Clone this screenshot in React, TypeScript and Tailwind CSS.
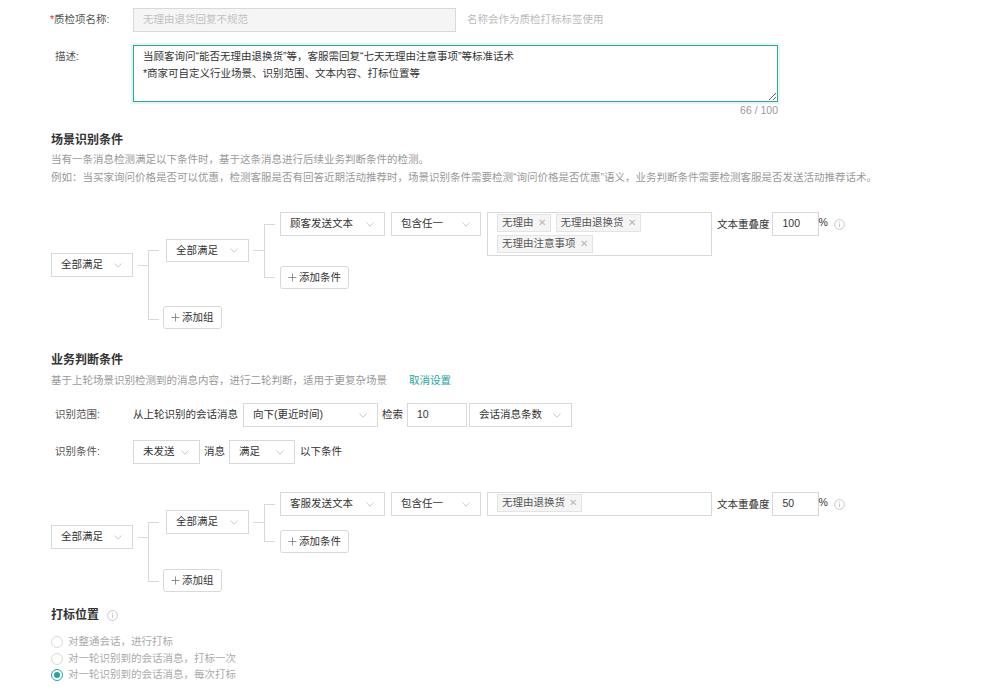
import React from "react";

const BORDER = "border-[#d9d9d9]";

function Chevron() {
  return (
    <svg width="8" height="5" viewBox="0 0 8 5" className="shrink-0">
      <path d="M0.5 0.5 L4 4.2 L7.5 0.5" fill="none" stroke="#c4c4c4" strokeWidth="0.9" />
    </svg>
  );
}

function Info() {
  return (
    <svg width="11" height="11" viewBox="0 0 11 11" className="shrink-0">
      <circle cx="5.5" cy="5.5" r="4.9" fill="none" stroke="#c2c2c2" strokeWidth="0.9" />
      <line x1="5.5" y1="4.6" x2="5.5" y2="8.2" stroke="#c2c2c2" strokeWidth="0.9" />
      <circle cx="5.5" cy="3.1" r="0.6" fill="#c2c2c2" />
    </svg>
  );
}

function Select({ text, className }: { text: string; className: string }) {
  return (
    <div
      className={`flex shrink-0 items-center justify-between border ${BORDER} bg-white pl-[9px] pr-[10px] text-[#333] ${className}`}
    >
      <span className="whitespace-nowrap">{text}</span>
      <Chevron />
    </div>
  );
}

function AddBtn({ text, className }: { text: string; className: string }) {
  return (
    <div
      className={`flex h-[23px] shrink-0 items-center rounded-[3px] border ${BORDER} bg-white pl-[7px] pr-[7px] text-[#333] ${className}`}
    >
      <svg width="9" height="9" viewBox="0 0 9 9" className="mr-[2px]">
        <line x1="4.5" y1="0.5" x2="4.5" y2="8.5" stroke="#777" strokeWidth="0.8" />
        <line x1="0.5" y1="4.5" x2="8.5" y2="4.5" stroke="#777" strokeWidth="0.8" />
      </svg>
      <span className="whitespace-nowrap">{text}</span>
    </div>
  );
}

function Tag({ text }: { text: string }) {
  return (
    <div className="flex h-[18px] items-center border border-[#e3e3e3] bg-[#f5f5f5] px-[4px] text-[#555]">
      <span className="whitespace-nowrap">{text}</span>
      <span className="ml-[4px] text-[9.5px] text-[#b5b5b5]">✕</span>
    </div>
  );
}

function ConditionRow({ who, tags, overlap }: { who: string; tags: string[]; overlap: string }) {
  return (
    <div className="flex items-start">
      <Select text={who} className="h-[24px] w-[105px]" />
      <Select text="包含任一" className="ml-[6px] h-[24px] w-[90px]" />
      <div
        className={`ml-[6px] flex min-h-[24px] w-[225px] flex-wrap gap-x-[5px] gap-y-[3px] border ${BORDER} bg-white pb-[2px] pl-[9px] pr-[9px] pt-[1px]`}
      >
        {tags.map((t) => (
          <Tag key={t} text={t} />
        ))}
      </div>
      <span className="ml-[5px] whitespace-nowrap leading-[24px] text-[#333]">文本重叠度</span>
      <div className={`ml-[2px] flex h-[24px] w-[47px] items-center border ${BORDER} bg-white pl-[10px] text-[#333]`}>
        {overlap}
      </div>
      <span className="leading-[20px] text-[#333]">%</span>
      <div className="ml-[6px] mt-[7px]">
        <Info />
      </div>
    </div>
  );
}

function Radio({ checked, text }: { checked?: boolean; text: string }) {
  return (
    <div className="flex h-[16.5px] items-center">
      <div
        className={`flex h-[12px] w-[12px] items-center justify-center rounded-full border bg-white ${
          checked ? "border-[#22a699]" : "border-[#d9d9d9]"
        }`}
      >
        {checked && <div className="h-[6px] w-[6px] rounded-full bg-[#22a699]" />}
      </div>
      <span className="ml-[5px] whitespace-nowrap text-[#aaa]">{text}</span>
    </div>
  );
}

export default function App() {
  return (
    <div className="min-h-[697px] w-[1003px] overflow-hidden bg-white pl-[50px] pt-[8px] font-['Liberation_Sans','Noto_Sans_CJK_SC',sans-serif] text-[10.5px] text-[#333]">
      {/* Row 1 */}
      <div className="flex items-center">
        <div className="w-[83px] whitespace-nowrap text-[#555]">
          <span className="text-[#f5222d]">*</span>质检项名称:
        </div>
        <div className={`flex h-[24px] w-[323px] items-center border ${BORDER} bg-[#f5f5f5] pl-[9px] text-[#c0c0c0]`}>
          无理由退货回复不规范
        </div>
        <span className="ml-[11px] text-[#bbb]">名称会作为质检打标标签使用</span>
      </div>

      {/* Row 2 */}
      <div className="mt-[13px] flex items-start">
        <div className="w-[83px] pl-[5px] pt-[3px] leading-[17px] text-[#555]">描述:</div>
        <textarea
          readOnly
          value={"当顾客询问“能否无理由退换货”等，客服需回复“七天无理由注意事项”等标准话术\n*商家可自定义行业场景、识别范围、文本内容、打标位置等"}
          className="block h-[57px] w-[645px] border border-[#2aaa9e] bg-white px-[9px] py-[2px] leading-[17px] text-[#333] shadow-[0_0_0_2px_rgba(42,170,158,0.12)] outline-none"
        />
      </div>
      <div className="mt-[1px] w-[728px] text-right leading-[14px] text-[#999]">66 / 100</div>

      {/* Section 1 */}
      <div className="ml-[1px] mt-[14px] text-[12px] font-bold leading-[18px] text-[#333]">场景识别条件</div>
      <div className="ml-[1px] mt-[1px] leading-[18px] text-[#999]">
        <div>当有一条消息检测满足以下条件时，基于这条消息进行后续业务判断条件的检测。</div>
        <div>
          例如：当买家询问价格是否可以优惠，检测客服是否有回答近期活动推荐时，场景识别条件需要检测“询问价格是否优惠”语义，业务判断条件需要检测客服是否发送活动推荐话术。
        </div>
      </div>

      {/* Tree 1 */}
      <div className="ml-[1px] mt-[26px] flex items-start">
        <Select text="全部满足" className="mt-[41px] h-[24px] w-[82px]" />
        <div className={`ml-[5px] mt-[53px] w-[10px] border-t ${BORDER}`} />
        <div className={`mt-[38px] h-[70px] w-[11px] border-b border-l border-t ${BORDER}`} />
        <div className="ml-[4px] flex flex-col items-start">
          <div className="ml-[3px] flex items-start">
            <Select text="全部满足" className="mt-[27px] h-[23px] w-[83px]" />
            <div className={`ml-[4px] mt-[38px] w-[11px] border-t ${BORDER}`} />
            <div className={`mt-[12px] h-[54px] w-[11px] border-b border-l border-t ${BORDER}`} />
            <div className="ml-[5px] flex flex-col items-start">
              <ConditionRow who="顾客发送文本" tags={["无理由", "无理由退换货", "无理由注意事项"]} overlap="100" />
              <AddBtn text="添加条件" className="mt-[10px]" />
            </div>
          </div>
          <AddBtn text="添加组" className="mt-[17px]" />
        </div>
      </div>

      {/* Section 2 */}
      <div className="ml-[1px] mt-[22px] text-[12px] font-bold leading-[18px] text-[#333]">业务判断条件</div>
      <div className="ml-[1px] mt-[2px] flex leading-[18px]">
        <span className="text-[#999]">基于上轮场景识别检测到的消息内容，进行二轮判断，适用于更复杂场景</span>
        <span className="ml-[22px] text-[#22a699]">取消设置</span>
      </div>

      <div className="mt-[14px] flex items-center">
        <div className="w-[83px] pl-[5px] text-[#555]">识别范围:</div>
        <span className="whitespace-nowrap">从上轮识别的会话消息</span>
        <Select text="向下(更近时间)" className="ml-[5px] h-[24px] w-[135px]" />
        <span className="ml-[4px]">检索</span>
        <div className={`ml-[4px] flex h-[24px] w-[60px] items-center border ${BORDER} pl-[9px]`}>10</div>
        <Select text="会话消息条数" className="ml-[2px] h-[24px] w-[103px]" />
      </div>

      <div className="mt-[13px] flex items-center">
        <div className="w-[83px] pl-[5px] text-[#555]">识别条件:</div>
        <Select text="未发送" className="h-[24px] w-[67px]" />
        <span className="ml-[4px]">消息</span>
        <Select text="满足" className="ml-[4px] h-[24px] w-[66px]" />
        <span className="ml-[5px]">以下条件</span>
      </div>

      {/* Tree 2 */}
      <div className="ml-[1px] mt-[28px] flex items-start">
        <Select text="全部满足" className="mt-[33px] h-[24px] w-[82px]" />
        <div className={`ml-[5px] mt-[45px] w-[10px] border-t ${BORDER}`} />
        <div className={`mt-[30px] h-[60px] w-[11px] border-b border-l border-t ${BORDER}`} />
        <div className="ml-[4px] flex flex-col items-start">
          <div className="ml-[3px] flex items-start">
            <Select text="全部满足" className="mt-[18px] h-[24px] w-[83px]" />
            <div className={`ml-[4px] mt-[30px] w-[11px] border-t ${BORDER}`} />
            <div className={`mt-[12px] h-[38px] w-[11px] border-b border-l border-t ${BORDER}`} />
            <div className="ml-[5px] flex flex-col items-start">
              <ConditionRow who="客服发送文本" tags={["无理由退换货"]} overlap="50" />
              <AddBtn text="添加条件" className="mt-[14px]" />
            </div>
          </div>
          <AddBtn text="添加组" className="mt-[16px]" />
        </div>
      </div>

      {/* Section 3 */}
      <div className="ml-[1px] mt-[14px] flex items-center leading-[18px]">
        <span className="text-[12px] font-bold text-[#333]">打标位置</span>
        <div className="ml-[8px]">
          <Info />
        </div>
      </div>
      <div className="ml-[1px] mt-[10px] flex flex-col">
        <Radio text="对整通会话，进行打标" />
        <Radio text="对一轮识别到的会话消息，打标一次" />
        <Radio checked text="对一轮识别到的会话消息，每次打标" />
      </div>
      <div className="ml-[1px] mt-[13px] h-[30px] w-[390px] bg-[#fcf7ea]" />
    </div>
  );
}
